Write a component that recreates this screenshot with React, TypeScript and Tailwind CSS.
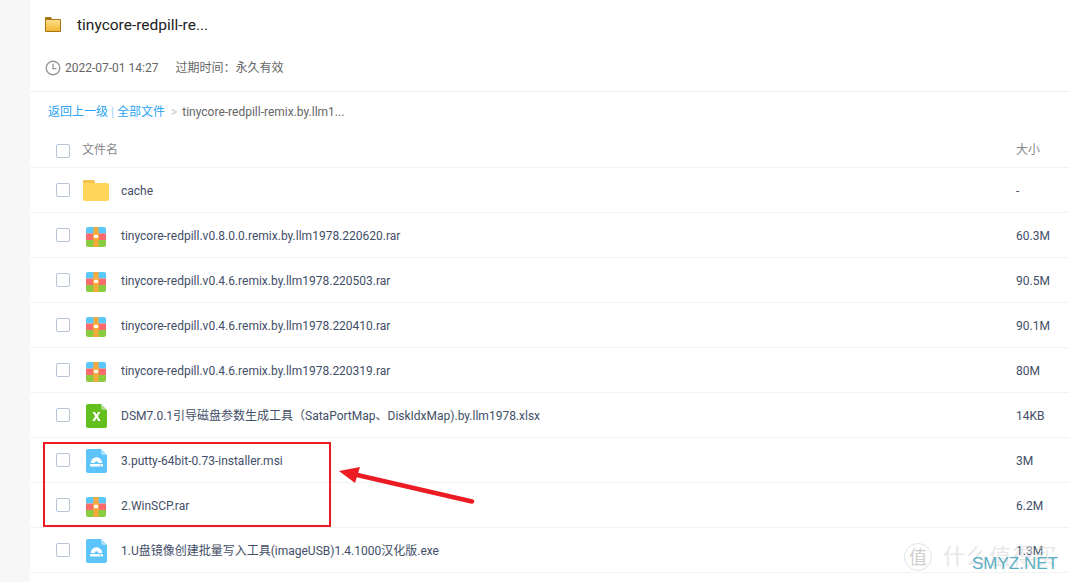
const font = { fontFamily: 'Roboto,"Noto Sans CJK SC",sans-serif' };

function Rar() {
  return (
    <svg width="20" height="20" viewBox="0 0 20 20" className="mt-[3px] block">
      <path d="M2 0H18A2 2 0 0 1 20 2V6.5H0V2A2 2 0 0 1 2 0Z" fill="#5AC8FA" />
      <rect x="0" y="6.5" width="20" height="6.5" fill="#FB6B6B" />
      <path d="M0 13H20V18A2 2 0 0 1 18 20H2A2 2 0 0 1 0 18Z" fill="#8ACB3F" />
      <rect x="7.5" y="0" width="5" height="20" fill="#F7A93B" />
      <rect x="7.5" y="7.2" width="5" height="4.4" fill="#fff" stroke="#F7A93B" strokeWidth="1.2" />
    </svg>
  );
}

function Doc({ color, children }: { color: string; children: React.ReactNode }) {
  return (
    <svg width="21" height="24" viewBox="0 0 21 24" className="mt-[2px] block">
      <path d="M2 0H15L21 6V22A2 2 0 0 1 19 24H2A2 2 0 0 1 0 22V2A2 2 0 0 1 2 0Z" fill={color} />
      <path d="M15 0L21 6H17A2 2 0 0 1 15 4Z" fill="#fff" opacity="0.45" />
      {children}
    </svg>
  );
}

function Disk() {
  return (
    <Doc color="#5CC3FB">
      <path d="M4.8 14A5.7 5.7 0 0 1 16.2 14H12.3A1.8 1.8 0 0 0 8.7 14Z" fill="#fff" />
      <rect x="4" y="15" width="13" height="2.6" rx="0.4" fill="#fff" />
      <rect x="13.5" y="15.8" width="1.5" height="1" fill="#5CC3FB" />
    </Doc>
  );
}

function Xls() {
  return (
    <Doc color="#62BF1E">
      <path d="M6.5 8H9L10.5 10.7L12 8H14.5L11.9 12.3L14.7 17H12.1L10.5 14.1L8.9 17H6.3L9.1 12.3Z" fill="#fff" />
    </Doc>
  );
}

function Folder() {
  return (
    <svg width="26" height="21" viewBox="0 0 26 21" className="block">
      <path d="M1 0H10A2 2 0 0 1 12 2V4H0V1A1 1 0 0 1 1 0Z" fill="#F2C34F" />
      <rect x="0" y="3" width="26" height="18" rx="1.5" fill="#FFD659" />
    </svg>
  );
}

const Box = () => <span className="block h-[14px] w-[14px] rounded-[2px] border border-[#b8c4d6] bg-white" />;

const rows: [React.ReactNode, string, string][] = [
  [<Folder />, "cache", "-"],
  [<Rar />, "tinycore-redpill.v0.8.0.0.remix.by.llm1978.220620.rar", "60.3M"],
  [<Rar />, "tinycore-redpill.v0.4.6.remix.by.llm1978.220503.rar", "90.5M"],
  [<Rar />, "tinycore-redpill.v0.4.6.remix.by.llm1978.220410.rar", "90.1M"],
  [<Rar />, "tinycore-redpill.v0.4.6.remix.by.llm1978.220319.rar", "80M"],
  [<Xls />, "DSM7.0.1引导磁盘参数生成工具（SataPortMap、DiskIdxMap).by.llm1978.xlsx", "14KB"],
  [<Disk />, "3.putty-64bit-0.73-installer.msi", "3M"],
  [<Rar />, "2.WinSCP.rar", "6.2M"],
  [<Disk />, "1.U盘镜像创建批量写入工具(imageUSB)1.4.1000汉化版.exe", "1.3M"],
];

export default function App() {
  return (
    <div className="relative flex h-[582px] w-[1069px] overflow-hidden bg-white" style={font}>
      <div className="w-[30px] shrink-0 bg-[#f7f7f7]" />
      <div className="min-w-0 flex-1">
        <div className="flex h-[50px] items-center pl-[15px] pt-[1px]">
          <svg width="16" height="15" viewBox="0 0 16 15" className="mt-[-2px] block">
            <defs>
              <linearGradient id="fold" x1="0" y1="0" x2="0" y2="1">
                <stop offset="0" stopColor="#FBE08A" />
                <stop offset="1" stopColor="#F2B630" />
              </linearGradient>
            </defs>
            <path d="M0 1A1 1 0 0 1 1 0H6L7 2H15A1 1 0 0 1 16 3V14A1 1 0 0 1 15 15H1A1 1 0 0 1 0 14Z" fill="#A87514" />
            <rect x="1" y="3" width="14" height="11" fill="url(#fold)" />
          </svg>
          <span className="ml-4 text-[15.5px] text-[#222]">tinycore-redpill-re...</span>
        </div>
        <div className="flex h-[42px] items-center border-b border-[#f0f0f0] pl-[15px] pb-[6px] text-[12px] text-[#666]">
          <svg width="16" height="16" viewBox="0 0 16 16" fill="none" stroke="#999" className="block">
            <circle cx="8" cy="8" r="6.8" strokeWidth="1.4" />
            <path d="M8 3.8V8.6H11.5" strokeWidth="1.4" />
          </svg>
          <span className="ml-1">2022-07-01 14:27</span>
          <span className="ml-[17px]">过期时间：永久有效</span>
        </div>
        <div className="flex h-[40px] items-center pl-[18px] text-[12px]">
          <span className="text-[#2aa4f4]">返回上一级</span>
          <span className="mx-[3px] text-[#9ccff5]">|</span>
          <span className="text-[#2aa4f4]">全部文件</span>
          <span className="ml-[6px] mr-[5px] text-[#c4c4c4]">&gt;</span>
          <span className="text-[#666]">tinycore-redpill-remix.by.llm1...</span>
        </div>
        <div className="flex h-[36px] items-center border-b border-[#f2f3f7] pl-[26px] pr-[24px] pt-[2px] text-[12px] text-[#888]">
          <Box />
          <span className="ml-[12px] flex-1 pb-[2px]">文件名</span>
          <span className="w-[29px] pb-[2px]">大小</span>
        </div>
        {rows.map(([icon, name, size], i) => (
          <div key={i} className="flex h-[45px] items-center border-b border-[#f2f3f7] pl-[26px] text-[12px] text-[#424e67]">
            <Box />
            <span className="ml-[13px] flex w-[26px] justify-center">{icon}</span>
            <span className="ml-[12px] flex-1 pt-[2px]">{name}</span>
            <span className="w-[53px] pt-[2px]">{size}</span>
          </div>
        ))}
      </div>
      <div className="absolute left-[43px] top-[442px] h-[85px] w-[288px] border-2 border-[#ed1c24]" />
      <svg className="absolute left-[330px] top-[455px]" width="150" height="55" viewBox="0 0 150 55" fill="none">
        <path d="M142 46.5L25 19.5" stroke="#ed1c24" strokeWidth="4.5" strokeLinecap="round" />
        <path d="M9 16L30 12L25 28Z" fill="#ed1c24" />
      </svg>
      <div className="absolute left-[904px] top-[543px] flex h-[28px] w-[28px] items-center justify-center rounded-full border border-[#e2e2e2] bg-white/40 text-[18px] text-[#cfcfcf]">值</div>
      <div className="absolute left-[943px] top-[542px] whitespace-nowrap text-[22px] leading-[30px] tracking-[1px] text-[#dddddd]/70">什么值得买</div>
      <div className="absolute left-[972px] top-[553px] whitespace-nowrap text-[17px] leading-[22px] text-[#5aaec4]" style={{ fontFamily: '"Liberation Sans",sans-serif' }}>SMYZ.NET</div>
    </div>
  );
}
